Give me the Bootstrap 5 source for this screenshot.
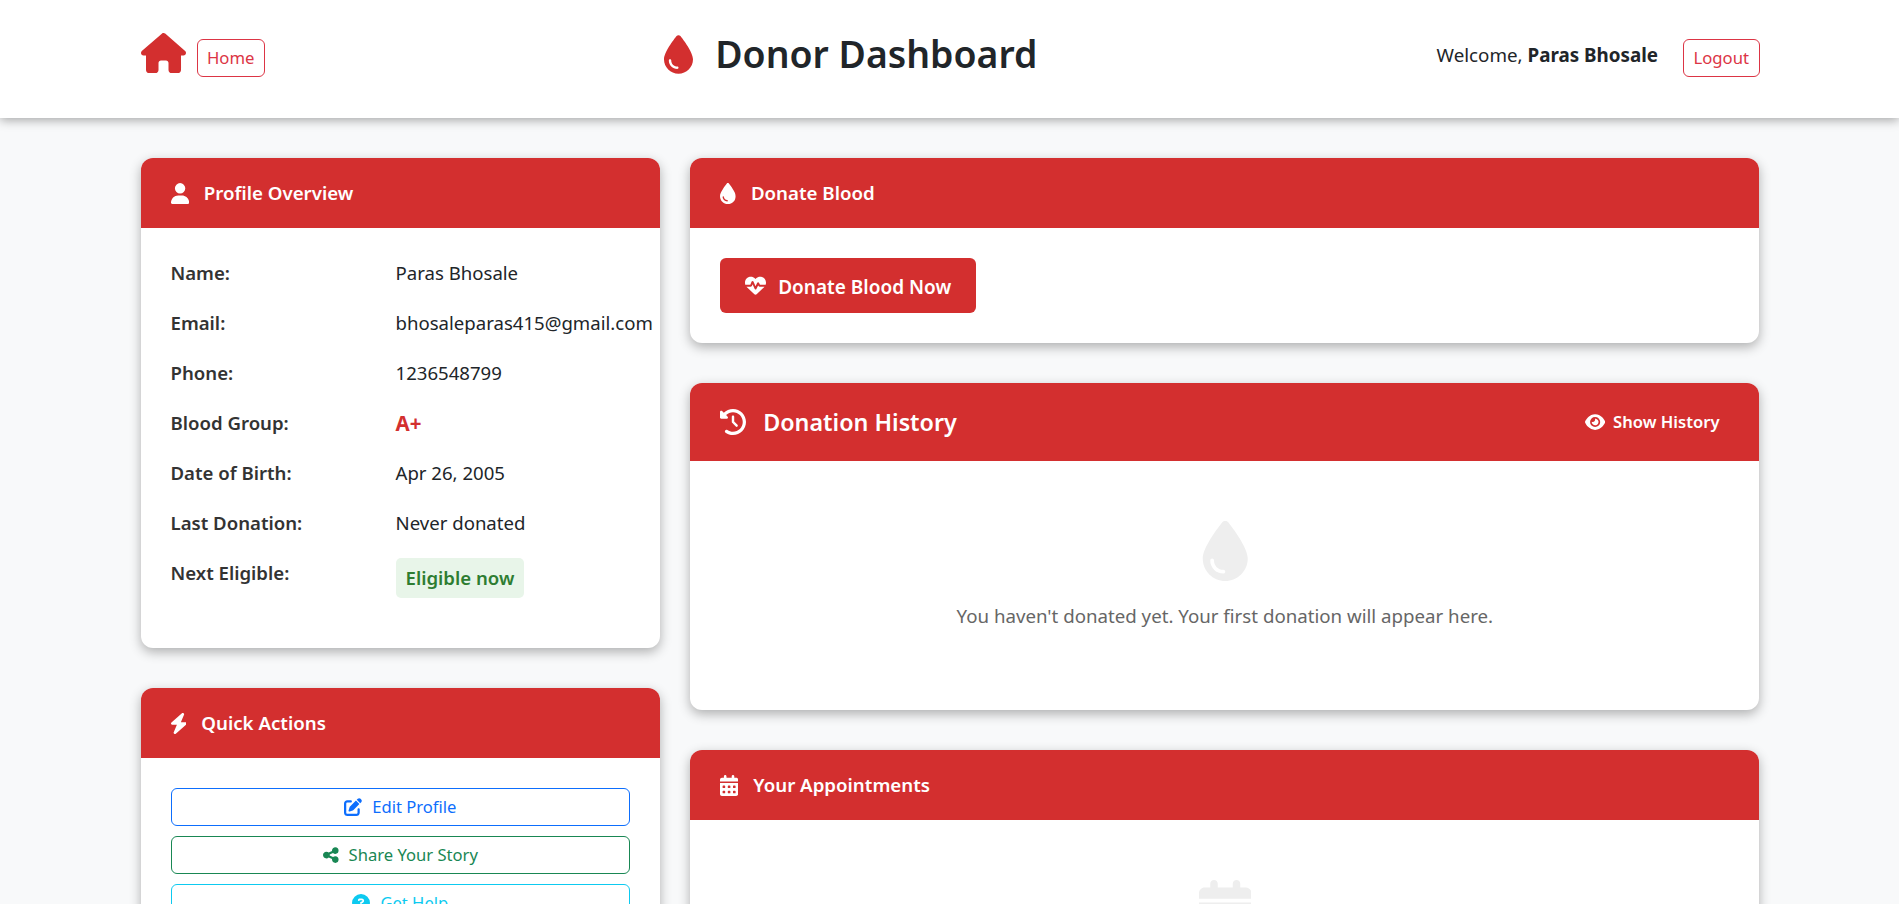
<!DOCTYPE html>
<html lang="en">
<head>
    <meta charset="UTF-8">
    <meta name="viewport" content="width=device-width, initial-scale=1.0">
    <title>Donor Dashboard</title>
    <link href="https://cdn.jsdelivr.net/npm/bootstrap@5.3.0/dist/css/bootstrap.min.css" rel="stylesheet">
    <style>
        body { background: #f8f9fa; font-family: "Noto Sans", sans-serif; font-size: 16px; color: #212529; line-height: 1.7; }
        .ico { fill: currentColor; flex-shrink: 0; display: block; }
        .page-wrap { max-width: 1649px; padding: 0 14.5px 0 15.5px; margin: 0 auto; }
        .top-bar { background: #fff; height: 118px; padding-bottom: 2px; box-shadow: 0 2px 10px rgba(0,0,0,.35); }
        .top-bar .btn { font-size: 16.7px; line-height: 24px; padding: 6px 9.5px; }
        .home-ico { width: 45px; height: 40px; color: #d32f2f; margin-right: 11px; margin-bottom: 10px; }
        .brand-box { margin-bottom: 7px; }
        .brand-ico { width: 29px; height: 39px; color: #d32f2f; margin-right: 22px; }
        .brand-title { font-size: 37.4px; font-weight: 600; line-height: 1.2; margin: 0; }
        .welcome-text { font-size: 18.8px; margin-right: 25px; margin-bottom: 4px; }
        .welcome-text b { font-weight: 700; }
        .main-row { --bs-gutter-x: 30px; margin-top: 40px; }
        .dash-card { background: #fff; border-radius: 12px; overflow: hidden; margin-bottom: 40px; box-shadow: 0 4px 12px rgba(0,0,0,.3); }
        .dash-head { background: #d32f2f; color: #fff; padding: 20px 30px; height: 70px; }
        .dash-head .ico { width: 18.2px; height: 21px; margin-right: 15px; }
        .dash-head .ico.slim { width: 15.75px; }
        .dash-head h3 { font-size: 18.7px; font-weight: 600; line-height: 30px; margin: 0; }
        .dash-head.tall { height: 78px; padding-right: 40px; }
        .dash-head.tall .ico.wide { height: 26px; width: 26px; margin-right: 17px; }
        .dash-head.tall h3 { font-size: 23.3px; }
        .show-link { color: #fff; font-weight: 600; font-size: 16.6px; text-decoration: none; }
        .dash-head .show-link .ico { height: 18px; width: 20.25px; margin-right: 8px; }
        .dash-body { padding: 30px; }
        .info-line { font-size: 18.6px; line-height: 30px; margin-bottom: 20px; white-space: nowrap; }
        .info-key { width: 225px; font-weight: 600; color: #333; flex-shrink: 0; }
        .blood-type { color: #d32f2f; font-weight: 700; font-size: 20.5px; }
        .eligible-tag { display: inline-block; padding: 5px 10px; border-radius: 5px; background: #e8f5e9; color: #2e7d32; font-weight: 600; }
        .btn-donate { background: #d32f2f; color: #fff; border: 0; border-radius: 6px; height: 55px; padding: 3px 25px 0; font-size: 19px; font-weight: 600; }
        .btn-donate:hover { background: #b71c1c; color: #fff; }
        .btn-donate .ico { width: 21px; height: 21px; margin-right: 12px; margin-top: -3px; }
        .action-btn { font-size: 16.6px; line-height: 24px; margin-bottom: 10px; }
        .action-btn .ico { height: 18px; width: 18px; margin-right: 10px; }
        .action-btn .ico.slim { width: 15.75px; }
        .empty-box { padding: 30px 0 49px; text-align: center; color: #666; font-size: 18.7px; }
        .empty-box .ico { height: 60px; width: 52.5px; color: #eee; margin: 0 auto 20px; }
        .empty-box p { line-height: 30px; margin: 0; }
    </style>
</head>
<body>
    <svg width="0" height="0" class="d-block">
        <symbol id="i-house" viewBox="0 0 576 512"><path d="M575.8 255.5c0 18-15 32.1-32 32.1h-32l.7 160.2c0 2.7-.2 5.4-.5 8.1V472c0 22.1-17.9 40-40 40H456c-1.1 0-2.2 0-3.3-.1c-1.4 .1-2.8 .1-4.2 .1H416 392c-22.1 0-40-17.9-40-40V448 384c0-17.7-14.3-32-32-32H256c-17.7 0-32 14.3-32 32v64 24c0 22.1-17.9 40-40 40H160 128.1c-1.5 0-3-.1-4.5-.2c-1.2 .1-2.4 .2-3.6 .2H104c-22.1 0-40-17.9-40-40V360c0-.9 0-1.9 .1-2.8V287.6H32c-18 0-32-14-32-32.1c0-9 3-17 10-24L266.4 8c7-7 15-8 22-8s15 2 21 7L564.8 231.5c8 7 12 15 11 24z"/></symbol>
        <symbol id="i-drop" viewBox="0 0 384 512"><path d="M192 512C86 512 0 426 0 320C0 228.8 130.2 57.7 166.6 11.7C172.6 4.2 181.5 0 191.1 0h1.8c9.6 0 18.5 4.2 24.5 11.7C253.8 57.7 384 228.8 384 320c0 106-86 192-192 192zM96 336c0-8.8-7.2-16-16-16s-16 7.2-16 16c0 61.9 50.1 112 112 112c8.8 0 16-7.2 16-16s-7.2-16-16-16c-44.2 0-80-35.8-80-80z"/></symbol>
        <symbol id="i-user" viewBox="0 0 448 512"><path d="M224 256A128 128 0 1 0 224 0a128 128 0 1 0 0 256zm-45.7 48C79.8 304 0 383.8 0 482.3C0 498.7 13.3 512 29.7 512H418.3c16.4 0 29.7-13.3 29.7-29.7C448 383.8 368.2 304 269.7 304H178.3z"/></symbol>
        <symbol id="i-bolt" viewBox="33 0 382 512"><path d="M349.4 44.6c5.9-13.7 1.5-29.7-10.6-38.5s-28.6-8-39.9 1.8l-256 224c-10 8.8-13.6 22.9-8.9 35.3S50.7 288 64 288H175.5L98.6 467.4c-5.9 13.7-1.5 29.7 10.6 38.5s28.6 8 39.9-1.8l256-224c10-8.8 13.6-22.9 8.9-35.3s-16.6-20.7-30-20.7H272.5L349.4 44.6z"/></symbol>
        <symbol id="i-pen" viewBox="0 0 512 512"><path d="M471.6 21.7c-21.9-21.9-57.3-21.9-79.2 0L362.3 51.7l97.9 97.9 30.1-30.1c21.9-21.9 21.9-57.3 0-79.2L471.6 21.7zm-299.2 220c-6.1 6.1-10.8 13.6-13.5 21.9l-29.6 88.8c-2.9 8.6-.6 18.1 5.8 24.6s15.9 8.7 24.6 5.8l88.8-29.6c8.2-2.7 15.7-7.4 21.9-13.5L437.7 172.3 339.7 74.3 172.4 241.7zM96 64C43 64 0 107 0 160V416c0 53 43 96 96 96H352c53 0 96-43 96-96V320c0-17.7-14.3-32-32-32s-32 14.3-32 32v96c0 17.7-14.3 32-32 32H96c-17.7 0-32-14.3-32-32V160c0-17.7 14.3-32 32-32h96c17.7 0 32-14.3 32-32s-14.3-32-32-32H96z"/></symbol>
        <symbol id="i-share" viewBox="0 0 448 512"><path d="M352 224c53 0 96-43 96-96s-43-96-96-96s-96 43-96 96c0 4 .2 8 .7 11.9l-94.1 47C145.4 170.2 121.9 160 96 160c-53 0-96 43-96 96s43 96 96 96c25.9 0 49.4-10.2 66.6-26.9l94.1 47c-.5 3.9-.7 7.8-.7 11.9c0 53 43 96 96 96s96-43 96-96s-43-96-96-96c-25.9 0-49.4 10.2-66.6 26.9l-94.1-47c.5-3.9 .7-7.8 .7-11.9s-.2-8-.7-11.9l94.1-47C302.6 213.8 326.1 224 352 224z"/></symbol>
        <symbol id="i-help" viewBox="0 0 512 512"><path d="M256 512A256 256 0 1 0 256 0a256 256 0 1 0 0 512zM169.8 165.3c7.9-22.3 29.1-37.3 52.8-37.3h58.3c34.9 0 63.1 28.3 63.1 63.1c0 22.6-12.1 43.5-31.7 54.8L280 264.4c-.2 13-10.9 23.6-24 23.6c-13.3 0-24-10.7-24-24V250.5c0-8.6 4.6-16.5 12.1-20.8l44.3-25.4c4.7-2.7 7.6-7.7 7.6-13.1c0-8.4-6.8-15.1-15.1-15.1H222.6c-3.4 0-6.4 2.1-7.5 5.3l-.4 1.2c-4.4 12.5-18.2 19-30.6 14.6s-19-18.2-14.6-30.6l.4-1.2zM224 352a32 32 0 1 1 64 0 32 32 0 1 1 -64 0z"/></symbol>
        <symbol id="i-pulse" viewBox="0 0 512 512"><path d="M228.3 469.1L47.6 300.4c-4.2-3.9-8.2-8.1-11.9-12.4h87c22.6 0 43-13.6 51.7-34.5l10.5-25.2 49.3 109.5c3.8 8.5 12.1 14 21.4 14.1s17.8-5 22-13.3L320 253.7l1.7 3.4c9.5 19 28.9 31 50.1 31H476.3c-3.7 4.3-7.7 8.5-11.9 12.4L283.7 469.1c-7.5 7-17.4 10.9-27.7 10.9s-20.2-3.9-27.7-10.9zM503.7 240h-132c-3 0-5.8-1.7-7.2-4.4l-23.2-46.3c-4.1-8.1-12.4-13.3-21.5-13.3s-17.4 5.1-21.5 13.3l-41.4 82.8L205.9 158.2c-3.9-8.7-12.7-14.3-22.2-14.1s-18.1 5.9-21.8 14.8l-31.8 76.3c-1.2 3-4.2 4.9-7.4 4.9H16c-2.6 0-5 .4-7.3 1.1C3 225.2 0 208.2 0 190.9v-5.8c0-69.9 50.5-129.5 119.4-141C165 36.5 211.4 51.4 244 84l12 12 12-12c32.6-32.6 79-47.5 124.6-39.9C461.5 55.6 512 115.2 512 185.1v5.8c0 16.9-2.8 33.5-8.3 49.1z"/></symbol>
        <symbol id="i-history" viewBox="0 0 512 512"><path d="M75 75L41 41C25.9 25.9 0 36.6 0 57.9V168c0 13.3 10.7 24 24 24H134.1c21.4 0 32.1-25.9 17-41l-30.8-30.8C155 85.5 203 64 256 64c106 0 192 86 192 192s-86 192-192 192c-40.8 0-78.6-12.7-109.7-34.4c-14.5-10.1-34.4-6.6-44.6 7.9s-6.6 34.4 7.9 44.6C151.2 495 201.7 512 256 512c141.4 0 256-114.6 256-256S397.4 0 256 0C185.3 0 121.3 28.7 75 75zm181 53c-13.3 0-24 10.7-24 24V256c0 6.4 2.5 12.5 7 17l72 72c9.4 9.4 24.6 9.4 33.9 0s9.4-24.6 0-33.9l-65-65V152c0-13.3-10.7-24-24-24z"/></symbol>
        <symbol id="i-eye" viewBox="0 0 576 512"><path d="M288 32c-80.8 0-145.5 36.8-192.6 80.6C48.6 156 17.3 208 2.5 243.7c-3.3 7.9-3.3 16.7 0 24.6C17.3 304 48.6 356 95.4 399.4C142.5 443.2 207.2 480 288 480s145.5-36.8 192.6-80.6c46.8-43.5 78.1-95.4 93-131.1c3.3-7.9 3.3-16.7 0-24.6c-14.9-35.7-46.2-87.7-93-131.1C433.5 68.8 368.8 32 288 32zM144 256a144 144 0 1 1 288 0 144 144 0 1 1 -288 0zm144-64c0 35.3-28.7 64-64 64c-7.1 0-13.9-1.2-20.3-3.3c-5.5-1.8-11.9 1.6-11.7 7.4c.3 6.9 1.3 13.8 3.2 20.7c13.7 51.2 66.4 81.6 117.6 67.9s81.6-66.4 67.9-117.6c-11.1-41.5-47.8-69.4-88.6-71.1c-5.8-.2-9.2 6.1-7.4 11.7c2.1 6.4 3.3 13.2 3.3 20.3z"/></symbol>
        <symbol id="i-cal" viewBox="0 0 448 512"><path d="M128 0c17.7 0 32 14.3 32 32V64H288V32c0-17.7 14.3-32 32-32s32 14.3 32 32V64h48c26.5 0 48 21.5 48 48v48H0V112C0 85.5 21.5 64 48 64H96V32c0-17.7 14.3-32 32-32zM0 192H448V464c0 26.5-21.5 48-48 48H48c-26.5 0-48-21.5-48-48V192zm64 80v32c0 8.8 7.2 16 16 16h32c8.8 0 16-7.2 16-16V272c0-8.8-7.2-16-16-16H80c-8.8 0-16 7.2-16 16zm128 0v32c0 8.8 7.2 16 16 16h32c8.8 0 16-7.2 16-16V272c0-8.8-7.2-16-16-16H208c-8.8 0-16 7.2-16 16zm144-16c-8.8 0-16 7.2-16 16v32c0 8.8 7.2 16 16 16h32c8.8 0 16-7.2 16-16V272c0-8.8-7.2-16-16-16H336zM64 400v32c0 8.8 7.2 16 16 16h32c8.8 0 16-7.2 16-16V400c0-8.8-7.2-16-16-16H80c-8.8 0-16 7.2-16 16zm144-16c-8.8 0-16 7.2-16 16v32c0 8.8 7.2 16 16 16h32c8.8 0 16-7.2 16-16V400c0-8.8-7.2-16-16-16H208zm112 16v32c0 8.8 7.2 16 16 16h32c8.8 0 16-7.2 16-16V400c0-8.8-7.2-16-16-16H336c-8.8 0-16 7.2-16 16z"/></symbol>
    </svg>

    <header class="top-bar">
        <div class="page-wrap h-100 d-flex align-items-center justify-content-between">
            <div class="d-flex align-items-center">
                <svg class="ico home-ico"><use href="#i-house"/></svg>
                <a href="#" class="btn btn-outline-danger">Home</a>
            </div>
            <div class="d-flex align-items-center brand-box">
                <svg class="ico brand-ico"><use href="#i-drop"/></svg>
                <h1 class="brand-title">Donor Dashboard</h1>
            </div>
            <div class="d-flex align-items-center">
                <span class="welcome-text">Welcome, <b>Paras Bhosale</b></span>
                <a href="#" class="btn btn-outline-danger">Logout</a>
            </div>
        </div>
    </header>

    <div class="page-wrap">
        <div class="row main-row">
            <div class="col-4">
                <div class="dash-card">
                    <div class="dash-head d-flex align-items-center">
                        <svg class="ico"><use href="#i-user"/></svg>
                        <h3>Profile Overview</h3>
                    </div>
                    <div class="dash-body">
                        <div class="info-line d-flex"><div class="info-key">Name:</div><div>Paras Bhosale</div></div>
                        <div class="info-line d-flex"><div class="info-key">Email:</div><div>bhosaleparas415@gmail.com</div></div>
                        <div class="info-line d-flex"><div class="info-key">Phone:</div><div>1236548799</div></div>
                        <div class="info-line d-flex"><div class="info-key">Blood Group:</div><div class="blood-type">A+</div></div>
                        <div class="info-line d-flex"><div class="info-key">Date of Birth:</div><div>Apr 26, 2005</div></div>
                        <div class="info-line d-flex"><div class="info-key">Last Donation:</div><div>Never donated</div></div>
                        <div class="info-line d-flex"><div class="info-key">Next Eligible:</div><div><span class="eligible-tag">Eligible now</span></div></div>
                    </div>
                </div>

                <div class="dash-card">
                    <div class="dash-head d-flex align-items-center">
                        <svg class="ico slim"><use href="#i-bolt"/></svg>
                        <h3>Quick Actions</h3>
                    </div>
                    <div class="dash-body">
                        <a href="#" class="btn btn-outline-primary action-btn w-100 d-flex align-items-center justify-content-center"><svg class="ico"><use href="#i-pen"/></svg>Edit Profile</a>
                        <a href="#" class="btn btn-outline-success action-btn w-100 d-flex align-items-center justify-content-center"><svg class="ico slim"><use href="#i-share"/></svg>Share Your Story</a>
                        <a href="#" class="btn btn-outline-info action-btn w-100 d-flex align-items-center justify-content-center"><svg class="ico"><use href="#i-help"/></svg>Get Help</a>
                    </div>
                </div>
            </div>

            <div class="col-8">
                <div class="dash-card">
                    <div class="dash-head d-flex align-items-center">
                        <svg class="ico slim"><use href="#i-drop"/></svg>
                        <h3>Donate Blood</h3>
                    </div>
                    <div class="dash-body">
                        <a href="#" class="btn btn-donate d-inline-flex align-items-center"><svg class="ico"><use href="#i-pulse"/></svg>Donate Blood Now</a>
                    </div>
                </div>

                <div class="dash-card">
                    <div class="dash-head tall d-flex align-items-center justify-content-between">
                        <div class="d-flex align-items-center">
                            <svg class="ico wide"><use href="#i-history"/></svg>
                            <h3>Donation History</h3>
                        </div>
                        <a href="#" class="show-link d-flex align-items-center"><svg class="ico"><use href="#i-eye"/></svg>Show History</a>
                    </div>
                    <div class="dash-body">
                        <div class="empty-box">
                            <svg class="ico"><use href="#i-drop"/></svg>
                            <p>You haven't donated yet. Your first donation will appear here.</p>
                        </div>
                    </div>
                </div>

                <div class="dash-card">
                    <div class="dash-head d-flex align-items-center">
                        <svg class="ico"><use href="#i-cal"/></svg>
                        <h3>Your Appointments</h3>
                    </div>
                    <div class="dash-body">
                        <div class="empty-box">
                            <svg class="ico"><use href="#i-cal"/></svg>
                            <p>You have no upcoming appointments.</p>
                        </div>
                    </div>
                </div>
            </div>
        </div>
    </div>

    <script src="https://cdn.jsdelivr.net/npm/bootstrap@5.3.0/dist/js/bootstrap.bundle.min.js"></script>
</body>
</html>
